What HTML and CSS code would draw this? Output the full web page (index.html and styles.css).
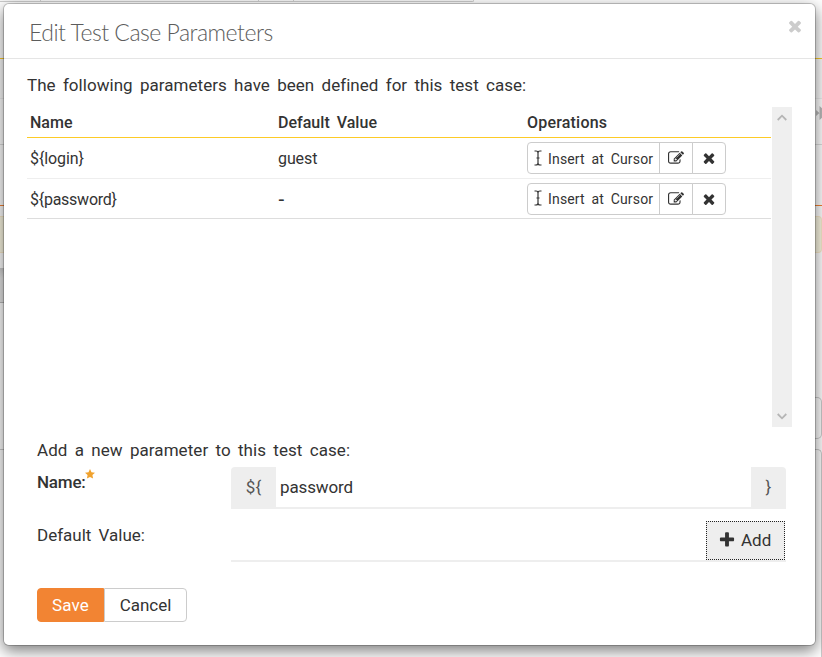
FILE: index.html
```html
<!DOCTYPE html>
<html lang="en">
<head>
<meta charset="utf-8">
<title>Edit Test Case Parameters</title>
<link rel="stylesheet" href="styles.css">
</head>
<body>
<svg class="defs" aria-hidden="true">
  <symbol id="times" viewBox="0 0 1792 1792"><path d="M1490 1322q0 40-28 68l-136 136q-28 28-68 28t-68-28l-294-294-294 294q-28 28-68 28t-68-28l-136-136q-28-28-28-68t28-68l294-294-294-294q-28-28-28-68t28-68l136-136q28-28 68-28t68 28l294 294 294-294q28-28 68-28t68 28l136 136q28 28 28 68t-28 68l-294 294 294 294q28 28 28 68z"/></symbol>
  <symbol id="plus" viewBox="0 0 1792 1792"><path d="M1600 736v192q0 40-28 68t-68 28h-416v416q0 40-28 68t-68 28h-192q-40 0-68-28t-28-68v-416h-416q-40 0-68-28t-28-68v-192q0-40 28-68t68-28h416v-416q0-40 28-68t68-28h192q40 0 68 28t28 68v416h416q40 0 68 28t28 68z"/></symbol>
  <symbol id="edit" viewBox="0 0 1792 1792"><path d="M888 1184l116-116-152-152-116 116v56h96v96h56zm440-720q-16-16-33 1l-350 350q-17 17-1 33t33-1l350-350q17-17 1-33zm80 594v190q0 119-84.500 203.500t-203.500 84.500h-832q-119 0-203.500-84.500t-84.500-203.500v-832q0-119 84.500-203.500t203.500-84.500h832q63 0 117 25 15 7 18 23 3 17-9 29l-49 49q-14 14-32 8-23-6-45-6h-832q-66 0-113 47t-47 113v832q0 66 47 113t113 47h832q66 0 113-47t47-113v-126q0-13 9-22l64-64q15-15 35-7t20 29zm-96-738l288 288-672 672h-288v-288zm444 132l-92 92-288-288 92-92q28-28 68-28t68 28l152 152q28 28 28 68t-28 68z"/></symbol>
  <symbol id="cursor" viewBox="0 0 8 16"><path d="M0.500 1H2Q4 1 4 3V13Q4 15 2 15H0.500M7.500 1H6Q4 1 4 3M4 13Q4 15 6 15H7.500M2.500 8H5.500" fill="none" stroke="currentColor" stroke-width="1.200"/></symbol>
</svg>

<div class="page">
  <div class="toolbar"><i class="cell c1"></i><i class="cell c2"></i><i class="cell c3"></i><i class="cell c4"></i></div>
  <div class="columns">
    <div class="edge left">
      <div class="head"></div><div class="sub"></div><div class="tabs"></div><div class="rule"></div>
      <div class="notice"></div><div class="shade"></div><div class="field"></div>
    </div>
    <div class="edge right">
      <div class="head"></div><div class="sub"></div>
      <div class="tabs"><svg class="ff" viewBox="0 0 8 14"><path d="M0 4L3.500 7 0 10zM3.500 0L8 4V10L3.500 14z"/></svg></div><div class="rule"></div>
      <div class="notice"></div><div class="box"></div><div class="box tall"></div>
    </div>
  </div>
</div>

<div class="modal" role="dialog">
  <header class="modal-head">
    <h1>Edit Test Case Parameters</h1>
    <svg class="close"><use href="#times"/></svg>
  </header>
  <p class="intro">The following parameters have been defined for this test case:</p>
  <div class="scroller">
    <div class="table">
      <div class="row th"><span>Name</span><span>Default Value</span><span class="ops-title">Operations</span></div>
      <div class="row">
        <span>${login}</span><span>guest</span>
        <div class="group">
          <button class="insert"><svg class="i-cursor"><use href="#cursor"/></svg>Insert at Cursor</button><button class="small"><svg class="i16"><use href="#edit"/></svg></button><button class="small"><svg class="i16"><use href="#times"/></svg></button>
        </div>
      </div>
      <div class="row last">
        <span class="pw">${password}</span><span class="none">-</span>
        <div class="group">
          <button class="insert"><svg class="i-cursor"><use href="#cursor"/></svg>Insert at Cursor</button><button class="small"><svg class="i16"><use href="#edit"/></svg></button><button class="small"><svg class="i16"><use href="#times"/></svg></button>
        </div>
      </div>
    </div>
    <div class="bar">
      <svg class="arrow" viewBox="0 0 10 7"><path d="M0.700 6L5 1.700 9.300 6"/></svg>
      <svg class="arrow" viewBox="0 0 10 7"><path d="M0.700 1L5 5.300 9.300 1"/></svg>
    </div>
  </div>
  <p class="add-intro">Add a new parameter to this test case:</p>
  <div class="form-row">
    <label class="required">Name:<svg class="star" viewBox="0 0 10 10"><path d="M5 0L6.500 3.300 10 3.700 7.400 6.100 8.100 9.600 5 7.900 1.900 9.600 2.600 6.100 0 3.700 3.500 3.300z"/></svg></label>
    <div class="input name"><span class="addon open">${</span><span class="value">password</span><span class="addon end">}</span></div>
  </div>
  <div class="form-row default-row">
    <label>Default Value:</label>
    <div class="input default"><button class="add"><svg class="i18"><use href="#plus"/></svg>Add</button></div>
  </div>
  <footer class="actions"><button class="save">Save</button><button class="cancel">Cancel</button></footer>
</div>
</body>
</html>
```
FILE: styles.css
```css
* { box-sizing: border-box; }
body { margin: 0; height: 657px; overflow: hidden; background: #fff; color: #333; font: 17px/24px Roboto, sans-serif; word-spacing: 3px; }
h1, p { margin: 0; }
button { margin: 0; padding: 0; font: inherit; color: inherit; word-spacing: inherit; background: #fff; border: 1px solid #ccc; display: flex; align-items: center; }
svg { fill: currentColor; flex: none; }
.defs { display: none; }

/* Page behind the dialog */
.page { height: 657px; display: flex; flex-direction: column; }
.toolbar { display: flex; height: 2px; }
.cell { height: 2px; border: solid #ccc; border-width: 0 1px 1px 0; background: #f8f8f8; }
.c1 { width: 41px; }
.c2 { width: 218px; }
.c3 { width: 35px; }
.c4 { width: 180px; border-radius: 0 0 2px 0; }
.columns { flex: 1; display: flex; justify-content: space-between; }
.edge { display: flex; flex-direction: column; }
.left { width: 5px; }
.right { width: 8px; }
.head { height: 57px; border-bottom: 1px solid #fdcb26; }
.sub { height: 40px; border-bottom: 1px solid #eee; background: #fcfcfc; }
.tabs { height: 46px; border-bottom: 1px solid #ddd; padding-top: 7px; }
.ff { display: block; width: 8px; height: 14px; margin-left: 2px; color: #bbb; }
.rule { height: 61px; border-bottom: 1px solid #f58233; }
.notice { height: 37px; margin-top: 10px; background: #fcf8e3; border: solid #faebcc; border-width: 1px 0; }
.right .notice { border-width: 1px 1px 1px 0; border-radius: 0 4px 4px 0; }
.shade { height: 35px; margin-top: 15px; background: linear-gradient(#ccc, #e6e6e6 30%); border-bottom: 1px solid #bbb; }
.field { height: 147px; border-bottom: 1px solid #ccc; }
.box { height: 42px; margin-top: 144px; border: 1px solid #ccc; border-left: 0; border-radius: 0 5px 5px 0; }
.box.tall { height: auto; flex: 1; margin-top: 10px; border-bottom: 0; border-radius: 0 5px 0 0; }

/* Dialog */
.modal { position: absolute; left: 3px; top: 3px; width: 813px; height: 643px; background: #fff; background-clip: padding-box; border: 1px solid rgba(0,0,0,.2); border-radius: 6px; box-shadow: 0 5px 15px rgba(0,0,0,.5); }
.modal-head { height: 55px; border-bottom: 1px solid #e5e5e5; display: flex; justify-content: space-between; padding: 13px 11px 0 25px; color: #777; }
h1 { color: #5c5c5c; font: 300 23px/30px Lato, sans-serif; letter-spacing: -.5px; word-spacing: 0; }
.close { width: 18px; height: 18px; color: #ccc; }
.intro { padding-left: 23px; margin-top: 14px; height: 34px; letter-spacing: .04px; }
.scroller { height: 320px; margin: 0 23px; display: flex; }
.table { width: 744px; margin-right: 1px; font-size: 16px; }
.row { display: grid; grid-template-columns: 248px 249px auto; align-items: center; height: 41px; border-bottom: 1px solid #eee; padding-left: 3px; letter-spacing: -.1px; }
.row > span { padding-top: 2px; }
.row.th { height: 31px; border-bottom-color: #fdcb26; font-weight: 500; letter-spacing: .02px; }
.row.last { height: 40px; border-bottom-color: #ddd; }
.ops-title { letter-spacing: .2px; }
.pw { letter-spacing: -.25px; }
.row .none { font-family: "Liberation Sans", sans-serif; font-size: 20px; padding-top: 0; }
.group { display: flex; height: 32px; }
.row.last .group { margin-top: 1px; }
.group button { height: 32px; font-size: 14px; letter-spacing: .17px; }
.insert { width: 133px; border-radius: 4px 0 0 4px; padding: 2px 0 0 6px; }
.i-cursor { width: 8px; height: 16px; margin: -2px 6px 0 0; }
.small { width: 34px; margin-left: -1px; justify-content: center; }
.last .insert { padding-top: 0; }
.last .small { padding-bottom: 1px; }
.small:last-child { border-radius: 0 4px 4px 0; }
.small:last-child .i16 { margin-right: 1px; }
.i16 { width: 16px; height: 16px; }
.bar { width: 20px; background: #efefef; color: #b5b5b5; display: flex; flex-direction: column; justify-content: space-between; align-items: center; padding: 7px 1px 7px 0; }
.arrow { width: 10px; height: 7px; fill: none; stroke: currentColor; stroke-width: 1.8; }
.add-intro { margin: 11px 0 5px 33px; letter-spacing: .06px; }
.form-row { display: flex; padding: 0 29px 0 33px; }
.default-row { margin-top: 11px; }
label { width: 194px; padding-top: 3px; }
.required { font-weight: 500; letter-spacing: -.2px; padding-top: 2px; }
.star { width: 10px; height: 10px; color: #f0a22e; vertical-align: 9px; margin-left: -1px; }
.input { flex: 1; display: flex; border-bottom: 2px solid #eee; }
.name { height: 42px; border-radius: 4px 4px 0 0; }
.addon { background: #eee; height: 42px; display: flex; align-items: center; justify-content: center; color: #555; padding-bottom: 2px; }
.open { width: 45px; border-radius: 4px 0 0 0; }
.end { width: 35px; border-radius: 0 4px 0 0; }
.value { flex: 1; padding: 8px 0 0 4px; letter-spacing: -.12px; }
.default { height: 42px; justify-content: flex-end; }
.add { width: 79px; height: 39px; margin: 1px 1px 0 0; padding: 0 0 1px 11px; background: #eee; border: 1px dotted #222; }
.i18 { width: 18px; height: 18px; margin-right: 5px; }
.actions { display: flex; margin: 26px 0 0 33px; }
.actions button { height: 34px; justify-content: center; }
.actions .save { width: 67px; background: #f28433; border-color: #f28433; color: #fff; border-radius: 4px 0 0 4px; letter-spacing: .15px; }
.actions .cancel { width: 83px; border-left-color: #ccc; border-radius: 0 4px 4px 0; }
```
